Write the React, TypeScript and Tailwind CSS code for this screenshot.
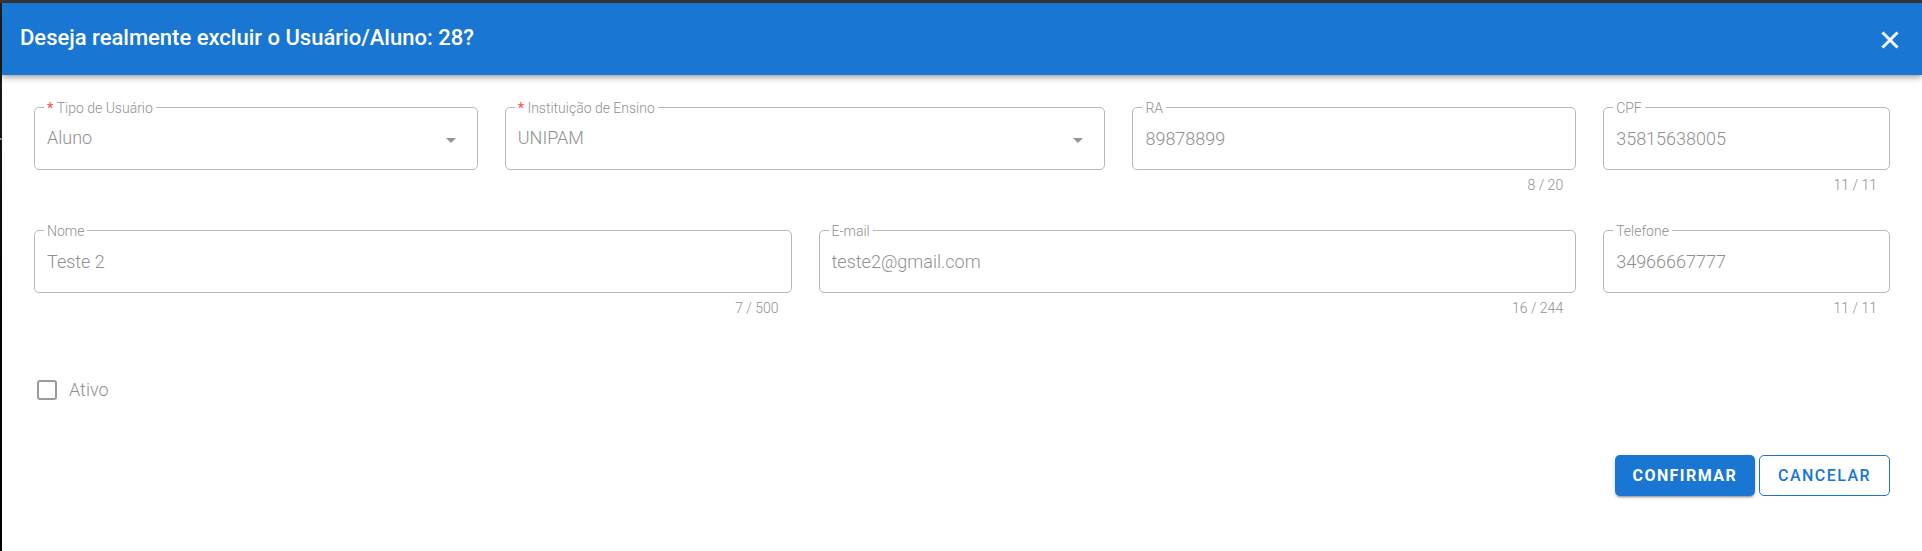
import type { ReactNode } from "react";

type FieldProps = {
  id: string;
  label: string;
  span: string;
  required?: boolean;
  counter?: string;
  children: ReactNode;
};

const controlClass =
  "block h-11 w-full appearance-none bg-transparent pl-[3px] text-lg font-light text-[#909090] opacity-100 outline-none";

function Field({ id, label, span, required, counter, children }: FieldProps) {
  return (
    <div className={span}>
      <fieldset className="min-w-0 rounded-[5px] border border-[#b8b8b8] px-[9px] pb-[9px]">
        <legend className="px-[3px] pt-0.5 text-sm leading-4 font-light text-[#909090]">
          <label htmlFor={id} className="block">
            {required && <span className="font-medium text-[#ff5252]">* </span>}
            {label}
          </label>
        </legend>
        <div className="relative">{children}</div>
      </fieldset>
      {counter && (
        <div className="mt-[7px] pr-[13px] text-right text-sm leading-4 font-light text-[#909090]">{counter}</div>
      )}
    </div>
  );
}

function TextField(props: Omit<FieldProps, "children"> & { value: string; type?: string }) {
  const { value, type = "text", ...field } = props;
  return (
    <Field {...field}>
      <input id={field.id} type={type} defaultValue={value} disabled className={controlClass} />
    </Field>
  );
}

function SelectField(props: Omit<FieldProps, "children"> & { value: string }) {
  const { value, ...field } = props;
  return (
    <Field {...field}>
      <select id={field.id} disabled defaultValue={value} className={controlClass}>
        <option>{value}</option>
      </select>
      <svg
        viewBox="0 0 24 24"
        aria-hidden="true"
        className="pointer-events-none absolute top-3 right-[5px] size-6 fill-[#949494]"
      >
        <path d="M7,10L12,15L17,10H7Z" />
      </svg>
    </Field>
  );
}

export default function App() {
  return (
    <div className="flex min-h-screen border-t-3 border-[#363636] bg-white font-[Roboto,sans-serif]">
      <div className="w-0.5 shrink-0 bg-linear-to-b from-[#202122] to-black pt-[135px]">
        <div className="h-0.5 bg-[#808080]" />
      </div>
      <div className="min-w-0 flex-1">
        <header className="relative flex h-[72px] items-center justify-between bg-[#1976d2] px-[18px] text-white shadow-[0_2px_4px_-1px_rgba(0,0,0,0.2),0_4px_5px_0_rgba(0,0,0,0.14),0_1px_10px_0_rgba(0,0,0,0.12)]">
          <h1 className="pb-0.5 text-[22px] leading-8 font-medium">Deseja realmente excluir o Usuário/Aluno: 28?</h1>
          <button type="button" aria-label="Fechar" className="pt-0.5">
            <svg viewBox="0 0 24 24" aria-hidden="true" className="size-7 fill-white stroke-white stroke-[0.5]">
              <path d="M19,6.41L17.59,5L12,10.59L6.41,5L5,6.41L10.59,12L5,17.59L6.41,19L12,13.41L17.59,19L19,17.59L13.41,12L19,6.41Z" />
            </svg>
          </button>
        </header>

        <form className="px-8 pt-[23px]">
          <div className="grid grid-cols-12 gap-x-[27px] gap-y-7">
            <SelectField id="tipo" label="Tipo de Usuário" value="Aluno" span="col-span-3" required />
            <SelectField id="instituicao" label="Instituição de Ensino" value="UNIPAM" span="col-span-4" required />
            <TextField id="ra" label="RA" value="89878899" counter="8 / 20" span="col-span-3" />
            <TextField id="cpf" label="CPF" value="35815638005" counter="11 / 11" span="col-span-2" />
            <TextField id="nome" label="Nome" value="Teste 2" counter="7 / 500" span="col-span-5" />
            <TextField id="email" label="E-mail" type="email" value="teste2@gmail.com" counter="16 / 244" span="col-span-5" />
            <TextField id="telefone" label="Telefone" type="tel" value="34966667777" counter="11 / 11" span="col-span-2" />
          </div>

          <div className="mt-15 flex items-center gap-3 pl-[3px]">
            <input
              id="ativo"
              type="checkbox"
              disabled
              className="size-5 appearance-none rounded-[3px] border-2 border-[#9b9b9b] bg-white"
            />
            <label htmlFor="ativo" className="text-lg font-light text-[#909090]">
              Ativo
            </label>
          </div>

          <div className="mt-[51px] flex justify-end gap-1">
            <button
              type="button"
              className="h-[41px] rounded-[5px] bg-[#1976d2] px-[18px] font-bold tracking-[0.09em] text-white uppercase shadow-[0_3px_1px_-2px_rgba(0,0,0,0.2),0_2px_2px_0_rgba(0,0,0,0.14),0_1px_5px_0_rgba(0,0,0,0.12)]"
            >
              Confirmar
            </button>
            <button
              type="button"
              className="h-[41px] rounded-[5px] border border-[#1976d2] px-[18px] font-medium tracking-[0.09em] text-[#1976d2] uppercase"
            >
              Cancelar
            </button>
          </div>
        </form>
      </div>
    </div>
  );
}
